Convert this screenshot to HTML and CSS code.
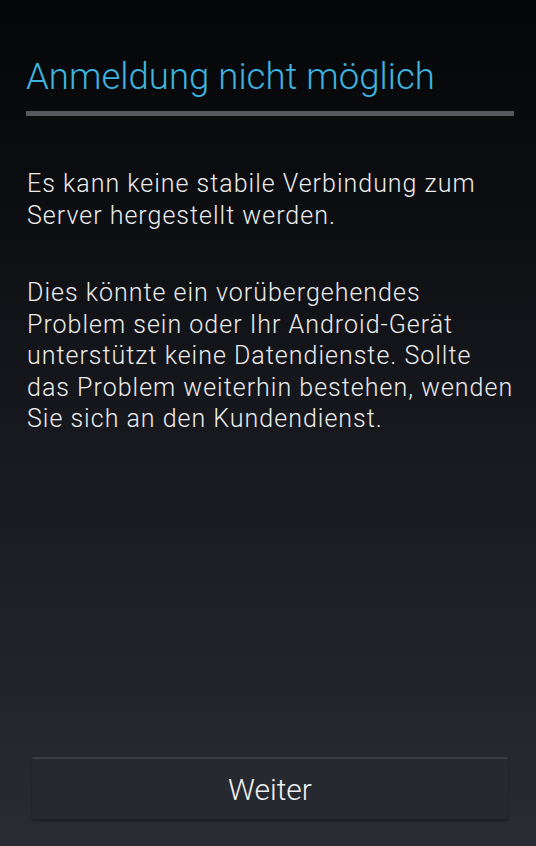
FILE: index.html
```html
<!DOCTYPE html>
<html lang="de">
<head>
    <meta charset="UTF-8">
    <meta name="viewport" content="width=device-width, initial-scale=1.0">
    <title>Anmeldung nicht möglich</title>
    <link rel="stylesheet" href="styles.css">
</head>
<body>
    <div class="dialog">
        <div class="dialog-header">
            <h1>Anmeldung nicht möglich</h1>
        </div>

        <div class="dialog-body">
            <p>Es kann keine stabile Verbindung zum Server hergestellt werden.</p>
            <p>Dies könnte ein vorübergehendes Problem sein oder Ihr Android-Gerät unterstützt keine Datendienste. Sollte das Problem weiterhin bestehen, wenden Sie sich an den Kundendienst.</p>
        </div>

        <div class="dialog-footer">
            <button class="btn">Weiter</button>
        </div>
    </div>
</body>
</html>
```

FILE: styles.css
```css
* {
    margin: 0;
    padding: 0;
    box-sizing: border-box;
}

html, body {
    height: 100%;
}

body {
    font-family: Roboto, 'Noto Sans', sans-serif;
    background: linear-gradient(180deg, #050608 0%, #0b0c0f 20%, #15171c 47%, #1e2026 71%, #292c33 100%);
    color: #ececec;
    overflow: hidden;
}

.dialog {
    display: flex;
    flex-direction: column;
    height: 100%;
}

.dialog-header {
    padding: 53px 22px 0 26px;
}

.dialog-header h1 {
    font-weight: 300;
    font-size: 36.6px;
    line-height: 48px;
    color: #3fb2df;
    padding-bottom: 10px;
    border-bottom: 5px solid #55585d;
}

.dialog-body {
    flex: 1;
    padding: 52px 21px 0 27px;
}

.dialog-body p {
    font-weight: 300;
    font-size: 25px;
    letter-spacing: 1px;
    line-height: 31.5px;
    margin-bottom: 46px;
}

.dialog-footer {
    padding: 0 28px 27px 32px;
}

.btn {
    display: block;
    width: 100%;
    height: 62px;
    background: #262930;
    color: #f0f0f0;
    border: none;
    border-top: 2px solid #3a3d44;
    border-radius: 2px;
    box-shadow: 0 2px 3px rgba(0,0,0,0.35);
    font-family: Roboto, 'Noto Sans', sans-serif;
    font-weight: 300;
    font-size: 30px;
    cursor: pointer;
}
```
